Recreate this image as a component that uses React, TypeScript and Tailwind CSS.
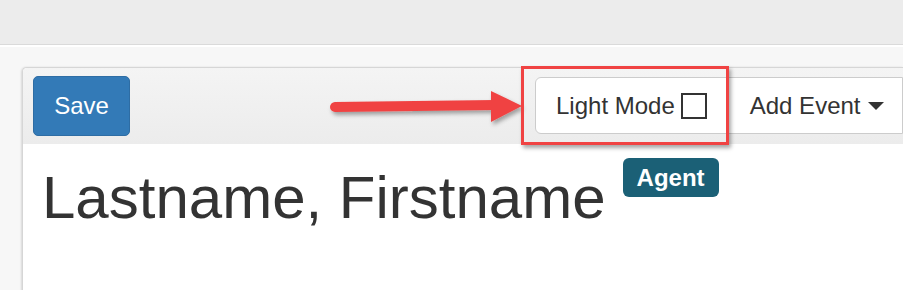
import React from "react";

export default function App() {
  return (
    <div
      className="relative w-[903px] h-[290px] overflow-hidden bg-[#f7f7f7] text-[#333]"
      style={{ fontFamily: '"Liberation Sans", Arial, sans-serif' }}
    >
      <div className="h-[45px] bg-[#ececec] border-b border-[#dadada]" />
      <div className="h-[2px] bg-white" />
      <div className="pl-[22px] pt-[20px]">
        <div className="h-[260px] bg-white border-l border-t border-[#d6d6d6] rounded-tl-[5px] shadow-[-1px_0_2px_rgba(0,0,0,0.12)] overflow-hidden">
          <div className="h-[76px] flex items-start pl-[10px] pt-[8px] bg-gradient-to-b from-[#f4f4f4] to-[#ececec]">
            <button className="w-[97px] h-[60px] rounded-[5px] bg-[#337ab7] border border-[#2e6da4] text-white text-[24px] leading-none">
              Save
            </button>
            <div className="ml-[405px] mt-[1px] flex h-[57px] bg-white border border-[#cccccc] rounded-l-[6px] flex-1">
              <div className="flex items-center pt-[1px] pl-[20px] pr-[20px] text-[24px] border-r border-[#cccccc]">
                <span>Light Mode</span>
                <span className="ml-[6px] w-[26px] h-[26px] border-2 border-[#333]" />
              </div>
              <div className="flex items-center pt-[1px] pl-[22px] text-[24px]">
                <span>Add Event</span>
                <span className="ml-[7px] w-0 h-0 border-l-[8px] border-r-[8px] border-t-[8px] border-l-transparent border-r-transparent border-t-[#333]" />
              </div>
            </div>
          </div>
          <div className="flex items-start pl-[19px] pt-[14px]">
            <h1 className="mt-[2px] text-[60px] leading-[76px] font-normal">Lastname, Firstname</h1>
            <span className="ml-[17px] h-[39px] px-[14px] flex items-center rounded-[6px] bg-[#1b6076] text-white font-bold text-[24px] leading-none">
              Agent
            </span>
          </div>
        </div>
      </div>

      {/* annotation: arrow */}
      <svg className="absolute left-[325px] top-[86px]" width="205" height="44" viewBox="0 0 205 44">
        <defs>
          <filter id="sh" x="-10%" y="-30%" width="130%" height="180%">
            <feDropShadow dx="2" dy="3" stdDeviation="2" floodColor="#000" floodOpacity="0.35" />
          </filter>
        </defs>
        <g filter="url(#sh)">
          <line x1="10" y1="21" x2="170" y2="19" stroke="#f04343" strokeWidth="10" strokeLinecap="round" />
          <polygon points="166,5 197,20 166,36" fill="#f04343" />
        </g>
      </svg>

      {/* annotation: red box */}
      <div className="absolute left-[521px] top-[66px] w-[208px] h-[79px] border-[3px] border-[#f04343] shadow-[2px_3px_4px_rgba(0,0,0,0.35)]" />
    </div>
  );
}
